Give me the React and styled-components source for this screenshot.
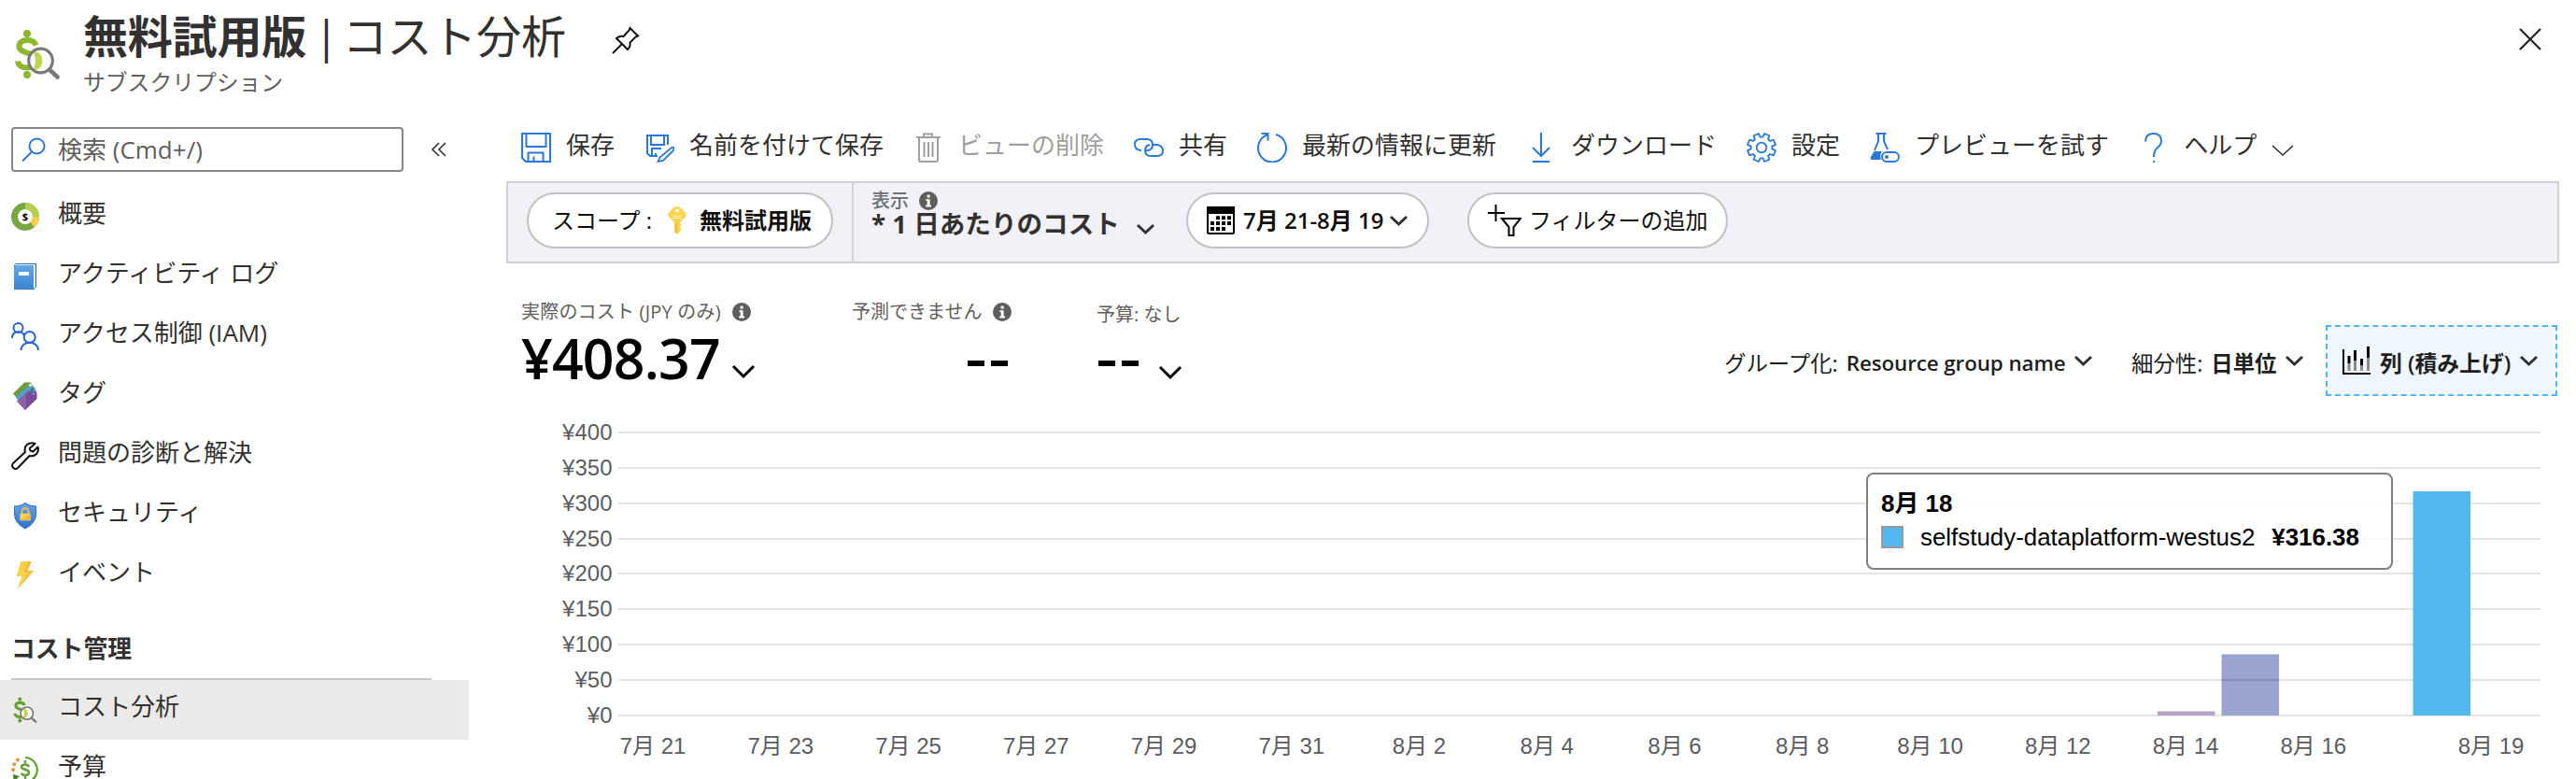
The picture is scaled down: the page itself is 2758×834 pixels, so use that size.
import React from "react";
import styled, { createGlobalStyle } from "styled-components";

const GlobalStyle = createGlobalStyle`
  * {
    box-sizing: border-box;
  }
  body {
    margin: 0;
    background: #fff;
    color: #323130;
    font-family: "Open Sans", "Noto Sans CJK JP", sans-serif;
  }
  svg {
    display: block;
    flex: none;
  }
`;

const Page = styled.div`
  width: 2758px;
  height: 834px;
  overflow: hidden;
  display: flex;
  flex-direction: column;
  white-space: nowrap;
`;

const Header = styled.header`
  display: flex;
  height: 120px;
  flex: none;
  padding: 0 36px 0 16px;
`;

const HeaderIcon = styled.div`
  width: 73px;
  padding-top: 31px;
`;

const TitleBlock = styled.div`
  display: flex;
  flex-direction: column;
`;

const TitleText = styled.h1`
  margin: 7px 0 0;
  font-size: 48px;
  line-height: 64px;
  font-weight: 700;
  letter-spacing: -0.2px;
  word-spacing: -4px;
`;

const TitleLight = styled.span`
  font-weight: 400;
  word-spacing: -8px;
`;

const Subtitle = styled.p`
  margin: 5px 0 0;
  font-size: 23.8px;
  line-height: 24px;
  color: #605e5c;
`;

const PinButton = styled.div`
  padding: 28px 0 0 49px;
`;

const CloseButton = styled.div`
  margin-left: auto;
  padding-top: 30px;
`;

const Body = styled.div`
  display: flex;
  flex: 1;
  min-height: 0;
`;

const Sidebar = styled.nav`
  width: 542px;
  flex: none;
`;

const SearchRow = styled.div`
  display: flex;
  align-items: center;
  gap: 29px;
  padding: 16px 0 0 12px;
  margin-bottom: 16px;
`;

const SearchBox = styled.div`
  display: flex;
  align-items: center;
  gap: 13px;
  width: 420px;
  height: 48px;
  padding-left: 9px;
  border: 2px solid #888786;
  border-radius: 4px;
  font-size: 26px;
  line-height: 40px;
  color: #605e5c;
`;

const MenuItem = styled.div`
  display: flex;
  align-items: center;
  gap: 20px;
  width: 502px;
  height: 64px;
  padding-left: 12px;
  font-size: 26px;
  line-height: 40px;
  background: ${({ $active }) => ($active ? "#ebeae8" : "transparent")};
`;

const MenuLabel = styled.span`
  padding-bottom: 8px;
`;

const MenuHeading = styled.div`
  width: 450px;
  height: 80px;
  margin-left: 12px;
  padding-top: 26px;
  border-bottom: 2px solid #c8c8c8;
  font-size: 25.8px;
  line-height: 40px;
  font-weight: 700;
`;

const Main = styled.main`
  width: 2198px;
  display: flex;
  flex-direction: column;
`;

const Toolbar = styled.div`
  display: flex;
  gap: 32px;
  height: 74px;
  padding: 22px 0 0 16px;
`;

const ToolButton = styled.div`
  display: flex;
  gap: 16px;
  height: 32px;
  font-size: 26px;
  line-height: 27px;
  color: ${({ $disabled }) => ($disabled ? "#a19f9d" : "#323130")};
`;

const HelpChevron = styled.span`
  padding-top: 13px;
`;

const FilterBar = styled.div`
  display: flex;
  height: 88px;
  border: 2px solid #d2d2d4;
  background: #f2f1f8;
`;

const ScopeCell = styled.div`
  width: 370px;
  padding: 10px 0 0 20px;
  border-right: 2px solid #d2d2d4;
`;

const Pill = styled.div`
  display: flex;
  align-items: center;
  width: ${({ $width }) => $width}px;
  height: 60px;
  padding-left: ${({ $pad = 20 }) => $pad}px;
  border: 2px solid #c1c0c2;
  border-radius: 30px;
  background: #fff;
  color: #11100f;
  font-size: 24px;
  line-height: 32px;
`;

const PillLabel = styled.span`
  width: ${({ $width }) => $width}px;
  padding-left: ${({ $pad = 0 }) => $pad}px;
  font-weight: ${({ $weight = 400 }) => $weight};
`;

const ViewCell = styled.div`
  width: 356px;
  padding: 7px 0 0 19px;
`;

const SmallText = styled.div`
  display: flex;
  align-items: center;
  gap: ${({ $gap = 11 }) => $gap}px;
  height: 24px;
  font-size: 20px;
  line-height: 24px;
  font-weight: ${({ $weight = 400 }) => $weight};
  letter-spacing: ${({ $spacing = 0 }) => $spacing}px;
  color: ${({ $color = "#605e5c" }) => $color};
`;

const ViewName = styled.div`
  display: flex;
  gap: 18px;
  font-size: 27.6px;
  line-height: 24px;
  font-weight: 700;
  & svg {
    margin-top: 13px;
  }
`;

const PillCell = styled.div`
  padding: 10px 41px 0 0;
`;

const Summary = styled.div`
  display: flex;
  height: 172px;
  padding-left: 16px;
`;

const Metric = styled.div`
  width: ${({ $width }) => $width}px;
  padding-top: ${({ $top = 40 }) => $top}px;
`;

const MetricValue = styled.div`
  display: flex;
  gap: ${({ $gap }) => $gap}px;
  width: fit-content;
  margin-left: ${({ $left = 0 }) => $left}px;
  font-size: 59px;
  line-height: 75px;
  font-weight: 600;
  letter-spacing: -0.8px;
  color: #000;
  & svg {
    margin-top: ${({ $drop = 45 }) => $drop}px;
  }
`;

const Dashes = styled.div`
  display: flex;
  gap: 7px;
  padding-top: ${({ $top = 40 }) => $top}px;
  & span {
    width: 18px;
    height: 6px;
    background: #000;
  }
`;

const ChartControls = styled.div`
  display: flex;
  align-items: center;
  height: 76px;
  margin: 66px 2px 0 auto;
  font-size: 23.4px;
  line-height: 32px;
  color: #201f1e;
  & span {
    padding-top: 6px;
  }
`;

const Control = styled.div`
  display: flex;
  align-items: center;
  gap: 9px;
  width: ${({ $width }) => $width}px;
`;

const StrongValue = styled.span`
  font-weight: 700;
`;

const GroupValue = styled.span`
  font-weight: 600;
  font-size: 22.4px;
  letter-spacing: -0.1px;
`;

const ChartType = styled.div`
  display: flex;
  align-items: center;
  gap: 10px;
  width: 248px;
  height: 76px;
  padding-left: 16px;
  border: 2px dashed #50b8ec;
  background: #f0f6ff;
  font-size: 23.8px;
  font-weight: 600;
`;

const ChartArea = styled.div`
  position: relative;
  height: 380px;
`;

const Tooltip = styled.div`
  position: absolute;
  left: 1456px;
  top: 52px;
  width: 564px;
  height: 104px;
  padding: 13px 14px;
  border: 2px solid #7f7f7f;
  border-radius: 8px;
  background: rgba(255, 255, 255, 0.85);
  color: #000;
  font-family: "Liberation Sans", "Noto Sans CJK JP", sans-serif;
  font-size: 25.9px;
  line-height: 36px;
`;

const TooltipRow = styled.div`
  display: flex;
  align-items: center;
  gap: 18px;
`;

const Swatch = styled.span`
  width: 24px;
  height: 24px;
  border: 2px solid #999;
  background: #50b8ec;
`;

const Chevron = ({ w = 19, h = 11, stroke = 3, color = "#323130" }) => (
  <svg width={w} height={h} viewBox={`0 0 ${w} ${h}`} fill="none" overflow="visible">
    <path d={`M1 1L${w / 2} ${h - 2}L${w - 1} 1`} stroke={color} strokeWidth={stroke} />
  </svg>
);

const InfoIcon = () => (
  <svg width="20" height="20" viewBox="0 0 20 20">
    <circle cx="10" cy="10" r="10" fill="#605e5c" />
    <rect x="8.6" y="3.6" width="3" height="3" fill="#fff" />
    <path d="M7.4 8.2h4.2v6.4h1.4v1.8H7.2v-1.8h1.5v-4.7H7.4z" fill="#fff" />
  </svg>
);

const CostIcon = ({ w, h, color = "#8cb82b", glass = "#7a7a7a" }) => (
  <svg width={w} height={h} viewBox="0 0 48 54" fill="none">
    <circle cx="13" cy="5" r="4" fill={color} />
    <circle cx="13" cy="49" r="4" fill={color} />
    <path
      d="M22.5 17.5C21 13 17.500 12 13.500 12C8 12 4.500 14.500 4.500 18.500C4.500 27.500 23 24 23 34C23 39 19 41.500 13 41.500C7 41.500 3.500 39 3 34.500"
      stroke={color}
      strokeWidth="6"
    />
    <circle cx="27.500" cy="34" r="13" fill="#fff" />
    <path d="M19.500 24.500C25 23 29.500 28 29.500 34C29.500 40 25 45 19.500 43.500C22.500 38 22.500 30 19.500 24.500z" fill="#bfd450" />
    <circle cx="27.500" cy="34" r="12.800" stroke={glass} strokeWidth="3.200" />
    <path d="M37 43.500L45.500 51.500" stroke={glass} strokeWidth="4.600" strokeLinecap="round" />
  </svg>
);

const PinIcon = () => (
  <svg width="30" height="30" viewBox="0 0 30 30" fill="none" stroke="#111" strokeWidth="2">
    <path d="M19.500 2L28 10.500L25.500 11.500L19.500 17.500C20 20.500 19 23 17 25L5 13C7.500 11 10 10.300 12.500 11L18.500 4.500z" />
    <path d="M11 19L1 29" />
  </svg>
);

const CloseIcon = () => (
  <svg width="26" height="24" viewBox="0 0 26 24" stroke="#222" strokeWidth="2.200">
    <path d="M2 1L24 23M24 1L2 23" />
  </svg>
);

const SearchIcon = () => (
  <svg width="26" height="26" viewBox="0 0 26 26" fill="none" stroke="#2b76d2" strokeWidth="2">
    <circle cx="16.500" cy="9.500" r="8" />
    <path d="M11 15.500L1 25.500" />
  </svg>
);

const CollapseIcon = () => (
  <svg width="18" height="16" viewBox="0 0 18 16" fill="none" stroke="#323130" strokeWidth="1.600">
    <path d="M9 1L2 8L9 15M16 1L9 8L16 15" />
  </svg>
);

const OverviewIcon = () => (
  <svg width="30" height="30" viewBox="0 0 30 30" fill="none">
    <circle cx="15" cy="15" r="11.500" stroke="#76a83f" strokeWidth="7" />
    <path d="M15 3.500A11.500 11.500 0 0 1 26.500 15" stroke="#b7cf4f" strokeWidth="7" />
    <path d="M26.500 15A11.500 11.500 0 0 1 22.500 23.500" stroke="#f8cd4a" strokeWidth="7" />
    <text x="15" y="19" fontSize="11" fontWeight="700" textAnchor="middle" fill="#000">
      $
    </text>
  </svg>
);

const BookIcon = () => (
  <svg width="30" height="30" viewBox="0 0 30 30">
    <defs>
      <linearGradient id="book" x1="0" y1="0" x2="0" y2="1">
        <stop offset="0" stopColor="#62a8e8" />
        <stop offset="1" stopColor="#3b84cf" />
      </linearGradient>
    </defs>
    <path d="M5 1h22v25l-2.500 3H3V3z" fill="#2f6cab" />
    <path d="M5 2h20.800v24l-1.500 2H4V3z" fill="#fff" />
    <path d="M3 4.500Q3 3 4.500 3H24v25.500H3z" fill="url(#book)" />
    <rect x="8" y="10" width="11" height="4" fill="#fff" />
  </svg>
);

const PeopleIcon = () => (
  <svg width="30" height="30" viewBox="0 0 30 30" fill="none" stroke="#2563d9" strokeWidth="2">
    <circle cx="7.500" cy="6" r="5" />
    <path d="M1 17C1 8.500 12.500 8.500 13.500 14" />
    <circle cx="19.700" cy="16" r="6" />
    <path d="M10.500 30C11 19 28.500 19 29 30" />
  </svg>
);

const TagIcon = () => (
  <svg width="30" height="30" viewBox="0 0 30 30">
    <path d="M2 12.500L14 .5Q17 0 21 .8L24 5L7 18z" fill="#699f36" />
    <path d="M4.500 16.500L17 4.500L24 5Q26.500 6 26 9L9 21z" fill="#579fca" />
    <path d="M6 20.500L19 9.500L26.500 9.500Q28 11 27.500 18L15 30z" fill="#7a4c97" />
    <path d="M6 20.500L16 12V29L15 30z" fill="#8963a5" />
    <circle cx="20.500" cy="3.300" r="1.600" fill="#e9f3dc" />
    <circle cx="22.500" cy="7.700" r="1.500" fill="#2d7a5a" />
    <circle cx="24" cy="12.500" r="1.800" fill="#4e8ccb" />
  </svg>
);

const WrenchIcon = () => (
  <svg width="30" height="30" viewBox="0 0 30 30" fill="none" stroke="#111" strokeWidth="2" strokeLinejoin="round">
    <path d="M25.500 2Q21 0 17 3Q13.500 6 15 11L2 23Q0 25.500 2.200 28Q4.800 30 7 28L19.500 15Q24 16 27 13Q30 9.500 28.500 5.500L23.500 10.500L20.500 9.500L19.800 7z" />
  </svg>
);

const ShieldIcon = () => (
  <svg width="30" height="30" viewBox="0 0 30 30">
    <defs>
      <linearGradient id="shield" x1="0" y1="0" x2="0" y2="1">
        <stop offset="0" stopColor="#6aa2e6" />
        <stop offset="1" stopColor="#2a73cd" />
      </linearGradient>
    </defs>
    <path d="M15 1Q20 4.500 27 4.500V14Q27 23 15 29.500Q3 23 3 14V4.500Q10 4.500 15 1z" fill="#2f74c8" />
    <path d="M15 2.500Q20 5.500 26 5.500V14Q26 22 15 28.500Q4 22 4 14V5.500Q10 5.500 15 2.500z" fill="url(#shield)" />
    <path d="M11.500 13V10.500a3.500 3.500 0 0 1 7 0V13" fill="none" stroke="#f3c14b" strokeWidth="1.800" />
    <rect x="9.500" y="12.800" width="11" height="7.400" fill="#fbd64f" />
    <path d="M20.500 12.800v7.400h-11z" fill="#f4b93f" />
  </svg>
);

const BoltIcon = () => (
  <svg width="30" height="30" viewBox="0 0 30 30">
    <path d="M10.500 0H21.500L17.500 10H24L6.500 30L11.500 16H5.500z" fill="#f9d149" />
    <path d="M21.500 0H18L13 12H19L8 28.300L24 10H17.500z" fill="#f3b941" />
  </svg>
);

const BudgetIcon = () => (
  <svg width="30" height="30" viewBox="0 0 30 30" fill="none">
    <path d="M15 2A13.200 13.200 0 1 1 7 26" stroke="#5e9f30" strokeWidth="2.200" />
    <path d="M2 20L9 22L2.500 28z" fill="#3f8a22" />
    <path d="M2 15A13 13 0 0 1 11.500 2" stroke="#df9239" strokeWidth="4" strokeLinecap="round" strokeDasharray="0 6" />
    <path
      d="M19 12Q18 9.500 15 9.500Q11 9.500 11 12.300C11 15.500 19 14 19 18Q19 21 15 21Q11.500 21 11 18.500"
      stroke="#5e9f30"
      strokeWidth="2.400"
    />
    <path d="M15 5v3M15 22v3" stroke="#5e9f30" strokeWidth="2.400" />
  </svg>
);

const ToolIcon = ({ color = "#2b79d6", width = 2, children }) => (
  <svg width="32" height="32" viewBox="0 0 32 32" fill="none" stroke={color} strokeWidth={width}>
    {children}
  </svg>
);

const SaveIcon = () => (
  <ToolIcon>
    <path d="M1 1H31V31H5L1 27z" />
    <path d="M5.500 1V15H26.500V1M7.500 31V21.500H23.500V31M13.500 31V25.500" />
  </ToolIcon>
);

const SaveAsIcon = () => (
  <ToolIcon>
    <path d="M14 25H6L3 22V3H25V13M7 3V13H21V3M8 25V17H18M12 25V22" />
    <path d="M28.500 16.500Q31 15 31.500 16.500Q32 18 30.500 19.500L20 30L14.500 31L16.500 26.500z" strokeWidth="1.800" />
  </ToolIcon>
);

const TrashIcon = () => (
  <ToolIcon color="#a19f9d">
    <path d="M3 5H29M11 5V1.500H20V5M6 5V29Q6 31 8 31H24Q26 31 26 29V5M11.500 10V26M16 10V26M20.500 10V26" />
  </ToolIcon>
);

const ShareIcon = () => (
  <ToolIcon>
    <path d="M8 19H7Q1 18 1 12.500Q1 7 7 7H14Q20 7 20 13Q20 19 14 19H13" />
    <path d="M19 13H25Q31 14 31 19.500Q31 25 25 25H18Q12 25 12 19Q12 14 17 13" />
  </ToolIcon>
);

const RefreshIcon = () => (
  <ToolIcon>
    <path d="M20 2A15 15 0 1 1 11 2.300M4.500 1H11.500V8.500" />
  </ToolIcon>
);

const DownloadIcon = () => (
  <ToolIcon>
    <path d="M16 0V25M7 16L16 25L25 16M7 31H25" />
  </ToolIcon>
);

// eight teeth, four points on each
const gearPoints = Array.from({ length: 8 }, (_, i) =>
  [
    [-0.27, 11.4],
    [-0.19, 15.3],
    [0.19, 15.3],
    [0.27, 11.4],
  ]
    .map(([offset, r]) => {
      const angle = ((i + 0.5) * Math.PI) / 4 + offset;
      return `${(16 + r * Math.cos(angle)).toFixed(2)},${(16 + r * Math.sin(angle)).toFixed(2)}`;
    })
    .join(" ")
).join(" ");

const GearIcon = () => (
  <ToolIcon width={1.8}>
    <polygon points={gearPoints} strokeLinejoin="round" />
    <circle cx="16" cy="16" r="5.300" />
  </ToolIcon>
);

const FlaskIcon = () => (
  <ToolIcon>
    <path d="M6.500 1H17.500M9 1V9L5 19M15 1V9L19 18" />
    <path d="M4.500 20H13Q10 24 12 29H1.500Q0 28 1 26z" fill="#2b79d6" stroke="none" />
    <rect x="13" y="21" width="18" height="10" rx="5" />
    <circle cx="18" cy="26" r="2" fill="#2b79d6" stroke="none" />
  </ToolIcon>
);

const HelpIcon = () => (
  <ToolIcon>
    <path d="M7 9.500Q7 1 15.500 1Q24 1 24 9Q24 13 19.500 16.500Q16 19.500 16 26M16 30V32" />
  </ToolIcon>
);

const KeyIcon = () => (
  <svg width="20" height="30" viewBox="0 0 20 30">
    <path d="M6 1.500Q10-1.500 14 1.500L19 7Q20.500 9 19 11L13 17V18.500L14.500 20L13 22L14.500 24L13 26V27L10 30L7 27V17L1 11Q-.5 9 1 7z" fill="#fbd24e" />
    <circle cx="10" cy="4.500" r="2" fill="#fff" />
    <path d="M4.500 10.300H15.500M5 12.500H15" stroke="#fff" strokeWidth="1" opacity=".7" />
    <path d="M9 18V28" stroke="#efb53b" strokeWidth="1.500" />
  </svg>
);

const CalendarIcon = () => (
  <svg width="30" height="30" viewBox="0 0 30 30">
    <rect x="1" y="1" width="28" height="28" rx="1" fill="#fff" stroke="#000" strokeWidth="2" />
    <rect x="0" y="0" width="30" height="8" fill="#000" />
    <path d="M10 12.200H27M4 18H27M4 24H21" stroke="#000" strokeWidth="4" strokeDasharray="4 2" />
  </svg>
);

const AddFilterIcon = () => (
  <svg width="36" height="34" viewBox="0 0 36 34" fill="none" stroke="#000" strokeWidth="2">
    <path d="M8.500 0V18M0 9H18" />
    <path d="M15 15H35L27.500 24V33H22.500V24z" />
  </svg>
);

const ColumnIcon = () => (
  <svg width="30" height="30" viewBox="0 0 30 30">
    <path d="M1 3V29H30" fill="none" stroke="#000" strokeWidth="2" />
    <path d="M7 18V26M13.500 15V26M20.500 20V26M27.500 12V26" stroke="#8a8a8a" strokeWidth="3" />
    <path d="M7 10V18M13.500 4V15M20.500 13V20M27.500 0V12" stroke="#000" strokeWidth="3" />
  </svg>
);

const menuItems = [
  { label: "概要", icon: <OverviewIcon /> },
  { label: "アクティビティ ログ", icon: <BookIcon /> },
  { label: "アクセス制御 (IAM)", icon: <PeopleIcon /> },
  { label: "タグ", icon: <TagIcon /> },
  { label: "問題の診断と解決", icon: <WrenchIcon /> },
  { label: "セキュリティ", icon: <ShieldIcon /> },
  { label: "イベント", icon: <BoltIcon /> },
];

const costItems = [
  { label: "コスト分析", icon: <CostIcon w={30} h={28} color="#62a02c" />, active: true },
  { label: "予算", icon: <BudgetIcon /> },
];

const tools = [
  { label: "保存", icon: <SaveIcon /> },
  { label: "名前を付けて保存", icon: <SaveAsIcon /> },
  { label: "ビューの削除", icon: <TrashIcon />, disabled: true },
  { label: "共有", icon: <ShareIcon /> },
  { label: "最新の情報に更新", icon: <RefreshIcon /> },
  { label: "ダウンロード", icon: <DownloadIcon /> },
  { label: "設定", icon: <GearIcon /> },
  { label: "プレビューを試す", icon: <FlaskIcon /> },
  { label: "ヘルプ", icon: <HelpIcon />, menu: true },
];

const days = [
  "7月 21", "7月 23", "7月 25", "7月 27", "7月 29", "7月 31", "8月 2", "8月 4",
  "8月 6", "8月 8", "8月 10", "8月 12", "8月 14", "8月 16", "8月 19",
];

const bars = [
  { x: 1768, height: 4.5, color: "#b9a4c8" },
  { x: 1836.5, height: 65.5, color: "#9aa4d1" },
  { x: 2041.5, height: 240, color: "#50b8ec" },
];

// plot area: ¥0 sits at y=312, every ¥50 is 37.9px
const Chart = () => (
  <svg
    width="2198"
    height="380"
    viewBox="0 0 2198 380"
    overflow="visible"
    fontFamily='"Liberation Sans", "Noto Sans CJK JP", sans-serif'
    fontSize="24"
    fill="#5a5c61"
  >
    {[400, 350, 300, 250, 200, 150, 100, 50, 0].map((amount) => {
      const y = Math.round(312 - (amount / 50) * 37.9);
      return (
        <g key={amount}>
          <rect x="120" y={y - 1} width="2058" height="2" fill="#e4e4e5" />
          <text x="113.500" y={y + 7.5} textAnchor="end">
            ¥{amount}
          </text>
        </g>
      );
    })}
    {bars.map((bar) => (
      <rect key={bar.x} x={bar.x} y={312 - bar.height} width="61.5" height={bar.height} fill={bar.color} />
    ))}
    <rect x="1836.500" y="273" width="61.5" height="2" fill="#878fc0" />
    {days.map((day, i) => (
      <text key={day} x={i === 14 ? 2125 : 157 + i * 136.75} y="353" textAnchor="middle">
        {day}
      </text>
    ))}
  </svg>
);

const Menu = ({ items }) =>
  items.map((item) => (
    <MenuItem key={item.label} $active={item.active}>
      {item.icon}
      <MenuLabel>{item.label}</MenuLabel>
    </MenuItem>
  ));

const App = () => {
  return (
    <Page>
      <GlobalStyle />
      <Header>
        <HeaderIcon>
          <CostIcon w={48} h={54} />
        </HeaderIcon>
        <TitleBlock>
          <TitleText>
            無料試用版 <TitleLight>| コスト分析</TitleLight>
          </TitleText>
          <Subtitle>サブスクリプション</Subtitle>
        </TitleBlock>
        <PinButton>
          <PinIcon />
        </PinButton>
        <CloseButton>
          <CloseIcon />
        </CloseButton>
      </Header>
      <Body>
        <Sidebar>
          <SearchRow>
            <SearchBox>
              <SearchIcon />
              検索 (Cmd+/)
            </SearchBox>
            <CollapseIcon />
          </SearchRow>
          <Menu items={menuItems} />
          <MenuHeading>コスト管理</MenuHeading>
          <Menu items={costItems} />
        </Sidebar>
        <Main>
          <Toolbar>
            {tools.map((tool) => (
              <ToolButton key={tool.label} $disabled={tool.disabled}>
                {tool.icon}
                {tool.label}
                {tool.menu && (
                  <HelpChevron>
                    <Chevron w={24} h={13} stroke={1.6} />
                  </HelpChevron>
                )}
              </ToolButton>
            ))}
          </Toolbar>
          <FilterBar>
            <ScopeCell>
              <Pill $width={328} $pad={25}>
                <PillLabel $width={124}>スコープ :</PillLabel>
                <KeyIcon />
                <PillLabel $width={150} $pad={14} $weight={700}>
                  無料試用版
                </PillLabel>
              </Pill>
            </ScopeCell>
            <ViewCell>
              <SmallText $weight={500} $color="#697077">
                表示
                <InfoIcon />
              </SmallText>
              <ViewName>
                * 1 日あたりのコスト
                <Chevron />
              </ViewName>
            </ViewCell>
            <PillCell>
              <Pill $width={260}>
                <CalendarIcon />
                <PillLabel $width={166} $pad={9} $weight={600}>
                  7月 21-8月 19
                </PillLabel>
                <Chevron />
              </Pill>
            </PillCell>
            <PillCell>
              <Pill $width={279}>
                <AddFilterIcon />
                <PillLabel $width={200} $pad={8}>
                  フィルターの追加
                </PillLabel>
              </Pill>
            </PillCell>
          </FilterBar>
          <Summary>
            <Metric $width={354}>
              <SmallText $gap={12} $spacing={0.2}>
                実際のコスト (JPY のみ)
                <InfoIcon />
              </SmallText>
              <MetricValue $gap={13}>
                ¥408.37
                <Chevron w={24} h={14} color="#000" />
              </MetricValue>
            </Metric>
            <Metric $width={262}>
              <SmallText $gap={12}>
                予測できません
                <InfoIcon />
              </SmallText>
              <MetricValue $left={124}>
                <Dashes>
                  <span />
                  <span />
                </Dashes>
              </MetricValue>
            </Metric>
            <Metric $width={200} $top={43}>
              <SmallText>予算: なし</SmallText>
              <MetricValue $gap={22} $left={2} $drop={43}>
                <Dashes $top={37}>
                  <span />
                  <span />
                </Dashes>
                <Chevron w={24} h={14} color="#000" />
              </MetricValue>
            </Metric>
            <ChartControls>
              <Control $width={436}>
                <span>グループ化:</span>
                <GroupValue>Resource group name</GroupValue>
                <Chevron />
              </Control>
              <Control $width={208}>
                <span>細分性:</span>
                <StrongValue>日単位</StrongValue>
                <Chevron />
              </Control>
              <ChartType>
                <ColumnIcon />
                <span>列 (積み上げ)</span>
                <Chevron />
              </ChartType>
            </ChartControls>
          </Summary>
          <ChartArea>
            <Chart />
            <Tooltip>
              <b>8月 18</b>
              <TooltipRow>
                <Swatch />
                selfstudy-dataplatform-westus2
                <b>¥316.38</b>
              </TooltipRow>
            </Tooltip>
          </ChartArea>
        </Main>
      </Body>
    </Page>
  );
};

export default App;
